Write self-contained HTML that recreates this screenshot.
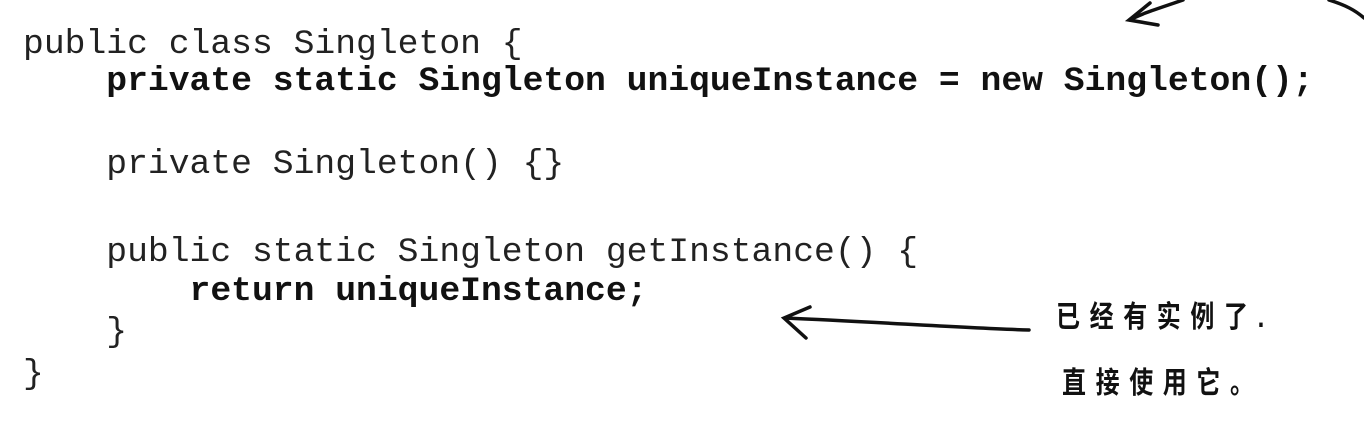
<!DOCTYPE html>
<html><head><meta charset="utf-8"><style>
html,body{margin:0;padding:0;background:#fff;width:1364px;height:426px;overflow:hidden;position:relative}
.l{position:absolute;left:23px;font-family:"Liberation Mono",monospace;font-size:34.7px;line-height:34.7px;color:#222;white-space:pre}
.b{font-weight:bold;color:#111}
.cn{position:absolute;font-family:"Liberation Sans","Noto Sans CJK SC",sans-serif;font-size:30px;color:#111;white-space:pre;letter-spacing:12px;font-weight:bold;transform-origin:0 0;transform:scaleX(0.8)}
</style></head><body>
<div class="l" style="top:28px">public class Singleton {</div>
<div class="l b" style="top:65px">    private static Singleton uniqueInstance = new Singleton();</div>
<div class="l" style="top:148px">    private Singleton() {}</div>
<div class="l" style="top:236px">    public static Singleton getInstance() {</div>
<div class="l b" style="top:275px">        return uniqueInstance;</div>
<div class="l" style="top:316px">    }</div>
<div class="l" style="top:358px">}</div>
<div class="cn" style="left:1056px;top:292px">已经有实例了.</div>
<div class="cn" style="left:1062px;top:358px">直接使用它。</div>
<svg style="position:absolute;left:0;top:0" width="1364" height="426">
<g fill="none" stroke="#111" stroke-width="3.5" stroke-linecap="round">
<path d="M1029 330 C 960 328, 880 322, 785 318"/>
<path d="M810 307 L784 318 L806 338"/>
<path d="M1183 0 C 1160 8, 1140 14, 1130 20"/>
<path d="M1150 3 L1129 20 L1158 25"/>
<path d="M1329 0 C 1345 5, 1355 10, 1364 18"/>
</g></svg>
</body></html>
